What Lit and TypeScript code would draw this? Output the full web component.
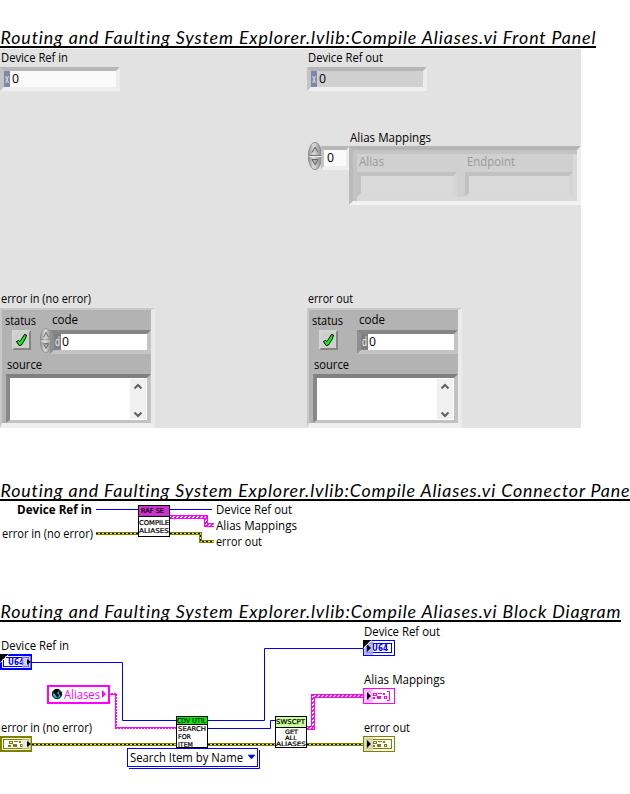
import { LitElement, html, svg, css } from "lit";
import { customElement } from "lit/decorators.js";

/* One line of text in a fixed 16px row, fitted to a given width. */
const label = (text: string, width: number, cls = "") => html`
  <svg class="label ${cls}" width=${width + 2} height="16">
    <text x="1" y="12" textLength=${width} lengthAdjust="spacingAndGlyphs">${text}</text>
  </svg>`;

const title = (text: string, width: number, cls: string) => html`
  <h1 class="title ${cls}">
    <svg width="630" height="24">
      <text x="0.5" y="20" textLength=${width} lengthAdjust="spacing">${text}</text>
    </svg>
  </h1>`;

/* Text placed on a diagram canvas. */
const put = (text: string, x: number, y: number, w: number, cls = "ui") =>
  svg`<text class=${cls} x=${x} y=${y} textLength=${w} lengthAdjust="spacingAndGlyphs">${text}</text>`;

const wire = (d: string) => svg`<path d=${d} fill="none" stroke="#0000f5" />`;

const errorWire = (d: string) => svg`
  <path d=${d} fill="none" stroke="#808000" stroke-width="3" />
  <path d=${d} fill="none" stroke="#f0f000" stroke-width="1" />
  <path d=${d} fill="none" stroke="#000" stroke-width="1" stroke-dasharray="2 2" />`;

const clusterWire = (d: string) => svg`
  <path d=${d} fill="none" stroke="#ff00ff" stroke-width="4" />
  <path d=${d} fill="none" stroke="#fff" stroke-dasharray="2 2" stroke-dashoffset=".5" transform="translate(-.5 -.5)" />
  <path d=${d} fill="none" stroke="#fff" stroke-dasharray="2 2" stroke-dashoffset="2.5" transform="translate(.5 .5)" />`;

const spinner = (w: number, h: number) => html`
  <svg class="spinner" width=${w} height=${h} viewBox="0 0 14 28" preserveAspectRatio="none">
    <defs>
      <linearGradient id="m" x1="0" x2="1">
        <stop offset="0" stop-color="#8e8e8e" /><stop offset=".4" stop-color="#dcdcdc" /><stop offset="1" stop-color="#858585" />
      </linearGradient>
    </defs>
    <ellipse cx="7" cy="14" rx="6.7" ry="13.7" fill="url(#m)" stroke="#858585" stroke-width=".8" />
    <path d="M1 13.5h12" stroke="#777" /><path d="M1 14.5h12" stroke="#eee" />
    <path d="M4 10.5L7 5l3 5.5" fill="#c6c6c6" stroke="#666" />
    <path d="M4 17.5h6L7 23z" fill="#aaa" stroke="#666" />
  </svg>`;

/* 16px-high diagram terminal: thick frame for controls, thin frame for indicators. */
const terminal = (x: number, y: number, color: string, pale: string, kind: string, input: boolean) => svg`
  <g transform="translate(${x} ${y})">
    <rect width="32" height="16" fill=${color} />
    ${input
      ? svg`<path d="M2.5 2.5h27v11h-27z" fill=${color} stroke="#fff"/><rect x="4" y="4" width="24" height="8" fill="#fff"/>`
      : svg`<rect x="1" y="1" width="30" height="14" fill="#fff"/>
            ${kind === "array" ? "" : svg`<rect x="3" y="3" width="26" height="10" fill=${color}/><rect x="4" y="4" width="24" height="8" fill="#fff"/>`}`}
    ${kind === "u64"
      ? svg`<text class="tiny heavy" x=${input ? 8 : 9} y="11" textLength="16" lengthAdjust="spacingAndGlyphs" fill=${color}>U64</text>`
      : svg`<g fill=${color} transform="translate(${input ? 0 : 1} 0)">
              <rect x="9" y="5" width="4" height="3"/><rect x="14" y="5" width="4" height="1"/>
              <rect x="19" y="5" width="2" height="2"/><rect x="8" y="9" width="3" height="2"/>
              <rect x="13" y="8" width="4" height="3"/><rect x="20" y="8" width="3" height="3"/></g>
            <rect x=${input ? 10 : 11} y="6" width="2" height="1" fill="#fff"/><rect x=${input ? 21 : 22} y="9" width="1" height="1" fill="#fff"/>`}
    ${kind === "array"
      ? svg`<path d="M8 3.5h-2.5v9h2.5M24 3.5h2.5v9h-2.5" fill="none" stroke=${color}/>` : ""}
    ${input
      ? svg`<rect x="22" y="2" width="9" height="12" fill=${pale} opacity=".6"/><path d="M27 5l4 3-4 3z" fill="#000"/>`
      : svg`<rect x="1" y="1" width="9" height="14" fill=${pale} opacity=".8"/><path d="M4 4l4 4-4 4z" fill="#000"/>`}
    ${kind === "u64" ? svg`<path d="M0 0h8L0 8z" fill="#000"/><path d="M8.5 .5L.5 8.5" stroke="#fff"/>` : ""}
  </g>`;

@customElement("app-root")
export class AppRoot extends LitElement {
  static styles = css`
    :host { display: block; width: 630px; height: 794px; background: #fff; overflow: hidden;
      font-family: "Open Sans", "Noto Sans", sans-serif; font-size: 12px; color: #000; }
    * { box-sizing: border-box; }
    svg { display: block; flex: none; }
    text { white-space: pre; }
    .label { fill: currentColor; overflow: visible; }
    .muted { color: #999; }
    .title { margin: 0; height: 24px; overflow: hidden; border-bottom: 2px solid #000; font-weight: 400; }
    .title text { font: italic 17.8px Lato, sans-serif; font-variant-ligatures: none; }
    .front { margin-top: 24px; width: 596px; }
    .connector { margin-top: 49px; }
    .block { margin-top: 49px; width: 621px; }
    .panel { display: flex; width: 581px; height: 379px; margin-top: 1px; padding-top: 1px; background: #e2e2e2; }
    .col { width: 307px; display: flex; flex-direction: column; }
    .col.right { width: 274px; }
    .field { display: flex; align-items: stretch; width: 120px; height: 24px; background: #fafafa;
      border: 4px solid; border-color: #b6b6b6 #ececec #efefef #c3c3c3; }
    .field > .label { margin-left: 1px; }
    .ref { margin-top: 1px; }
    .ref.out { background: #d0d0d0; }
    .radix { width: 6px; flex: none; background: #7a8aa8; color: #eef1f6; }
    .radix.dec { width: 7px; background: #808080; }
    .array { display: flex; margin-top: 38px; }
    .index { display: flex; width: 43px; padding: 13px 0 0 1px; }
    .index .field { width: 29px; margin: 4px 0 0 -1px; border-left-width: 3px; }
    .index .field > .label { margin-left: 2px; }
    .names-row { padding-top: 1px; margin-left: -1px; }
    .mappings { height: 59px; width: 232px; display: flex; background: #d0d0d0;
      border: 4px solid; border-color: #b4b4b4 #efefef #f2f2f2 #bababa; box-shadow: inset 4px 4px #c4c4c4, inset -4px -4px #d9d9d9; }
    .cell { width: 108px; padding: 4px 0 0 4px; }
    .cell .label { margin-left: 0.5px; }
    .cell .field { width: 100px; height: 25px; margin-top: 2px; background: #dadada; border-color: #c1c1c1 #d5d5d5 #d8d8d8 #c1c1c1; }
    .cell.end .field { width: 108px; }
    .status-group { margin-top: 200px; }
    .right .status-group { margin-top: 86px; }
    .cluster { width: 155px; height: 120px; margin-top: 1px; background: #b3b3b3; border: solid;
      border-width: 2px 4px 5px 2px; border-color: #c8c8c8 #ebebeb #eee #c8c8c8; }
    .row { display: flex; }
    .names { height: 20px; padding: 3px 0 0 2px; }
    .names .second { margin: -1px 0 0 14px; }
    .values { height: 24px; padding-left: 10px; }
    .led { width: 19px; height: 20px; background: #cfcfcf; border: 2px solid; border-color: #d4d4d4 #858585 #858585 #d4d4d4; }
    .spin { width: 19px; padding: 0 0 0 9px; margin-top: -2px; }
    .code { width: 101px; background: #fff; border-color: #858585 #c4c4c4 #c4c4c4 #909090; }
    .code > .label { margin-left: 0; }
    .source-name { padding: 3px 0 0 4px; }
    .source { display: flex; justify-content: flex-end; width: 145px; height: 49px; margin: 1px 0 0 4px; padding: 1px; background: #fff;
      border: 4px solid; border-color: #808080 #c2c2c2 #c2c2c2 #888; border-bottom-width: 3px; }
    .scroll { width: 16px; height: 40px; background: #f0f0f0; }
    .canvas { overflow: visible; }
    .ui { font-size: 12px; }
    .bold { font-size: 12px; font-weight: 700; }
    .pink { font-size: 12px; fill: #ff00ff; }
    .tiny { font: 6.6px "DejaVu Sans", sans-serif; stroke: #000; stroke-width: .2px; }
    .tight { font-size: 6px; }
    .heavy { font-size: 8.5px; font-weight: 700; stroke: none; }
  `;

  private cluster(name: string, width: number, control: boolean) {
    return html`
      <section class="status-group">
        ${label(name, width)}
        <div class="cluster">
          <div class="row names">${label("status", 31)}<div class="second">${label("code", 26)}</div></div>
          <div class="row values">
            <div class="led">
              <svg width="15" height="16">
                <path d="M2.5 9.5l2-1 1.5 1 4.5-7 2 .5-1 3.5-4 6.5-2.5.5z" fill="#00ff00" stroke="#000" />
              </svg>
            </div>
            <div class="spin">${control ? spinner(12, 25) : ""}</div>
            <div class="field code">
              <div class="radix dec">${label("d", 5)}</div>${label("0", 7)}
            </div>
          </div>
          <div class="source-name">${label("source", 35)}</div>
          <div class="source">
            <svg class="scroll" viewBox="0 0 16 40">
              <path d="M4.5 9.500L8 6l3.500 3.500M4.500 33.500L8 37l3.500-3.500" fill="none" stroke="#606060" stroke-width="2" />
            </svg>
          </div>
        </div>
      </section>`;
  }

  private reference(name: string, width: number, out: boolean) {
    return html`
      ${label(name, width)}
      <div class="field ref ${out ? "out" : ""}">
        <div class="radix">${label("x", 4)}</div>${label("0", 7)}
      </div>`;
  }

  private node(x: number, y: number, header: string, split: number, lines: unknown) {
    return svg`
      <rect x=${x} y=${y} width="32" height="32" fill="#000" />
      <rect x=${x + 1} y=${y + 1} width="30" height="30" fill="#fff" />
      <rect x=${x + 1} y=${y + 1} width="30" height=${split} fill=${header} />
      <rect x=${x + 1} y=${y + split} width="30" height="1" fill="#000" />
      ${lines}`;
  }

  render() {
    const name = "Routing and Faulting System Explorer.lvlib:Compile Aliases.vi ";
    return html`
      ${title(name + "Front Panel", 595, "front")}
      <main class="panel">
        <div class="col">
          ${this.reference("Device Ref in", 67, false)}
          ${this.cluster("error in (no error)", 90, true)}
        </div>
        <div class="col right">
          ${this.reference("Device Ref out", 75, true)}
          <section class="array">
            <div class="index">${spinner(14, 28)}<div class="field">${label("0", 7)}</div></div>
            <div class="names-row">
              ${label("Alias Mappings", 81)}
              <div class="mappings">
                <div class="cell">${label("Alias", 25, "muted")}<div class="field"></div></div>
                <div class="cell end">${label("Endpoint", 48, "muted")}<div class="field"></div></div>
              </div>
            </div>
          </section>
          ${this.cluster("error out", 45, false)}
        </div>
      </main>

      ${title(name + "Connector Pane", 629, "connector")}
      <svg class="canvas" width="630" height="48" viewBox="0 501 630 48">
        ${put("Device Ref in", 17, 514, 75, "bold")}
        ${put("error in (no error)", 2, 538, 91)}
        ${put("Device Ref out", 216, 514, 76)}
        ${put("Alias Mappings", 216, 530, 81)}
        ${put("error out", 216, 546, 46)}
        ${wire("M96 509.500H138M170 509.500H212")}
        ${clusterWire("M170 517H206V525H214")}
        ${errorWire("M96 533.500H138")}
        ${errorWire("M170 533.500H200.500V541.500H214")}
        ${this.node(138, 505, "#cc33cc", 11, [
          put("RAF SE", 141, 513, 23, "tiny"),
          put("COMPILE", 139, 525, 30, "tiny"),
          put("ALIASES", 139, 533, 30, "tiny"),
        ])}
      </svg>

      ${title(name + "Block Diagram", 620, "block")}
      <svg class="canvas" width="630" height="172" viewBox="0 622 630 172">
        ${put("Device Ref in", 1, 650, 68)}
        ${put("error in (no error)", 1, 732, 91)}
        ${put("Device Ref out", 364, 636, 76)}
        ${put("Alias Mappings", 364, 684, 81)}
        ${put("error out", 364, 732, 46)}
        ${wire("M32 662.500H122.500V720.500H176M208 720.500H264.500V648.500H363M208 728.500H270.500V720.500H275")}
        <path d="M110 694H116V728H176" fill="none" stroke="#ff00ff" stroke-width="2" />
        <path d="M110 693.500H116.500V728.500H176" fill="none" stroke="#fff" stroke-dasharray="1 2" />
        ${clusterWire("M307 728H313V696H363")}
        ${errorWire("M32 744.500H176")}
        ${errorWire("M208 744.500H275")}
        ${errorWire("M307 744.500H363")}

        ${terminal(0, 654, "#0000ff", "#b4b4ff", "u64", true)}
        ${terminal(0, 736, "#808000", "#dcdcb4", "cluster", true)}
        ${terminal(363, 640, "#0000ff", "#a8a8ff", "u64", false)}
        ${terminal(363, 688, "#ff00ff", "#ffb4ff", "array", false)}
        ${terminal(363, 736, "#808000", "#d6d6ac", "cluster", false)}

        <rect x="48" y="686" width="61" height="17" fill="#fff" stroke="#ff00ff" stroke-width="2" />
        <circle cx="57" cy="694" r="4.700" fill="#18b8e8" stroke="#000" />
        <path d="M54 690l4-1 1 2-2 2 2 2-1 3-2-2-1-2-2-1zM59 691l3 2-1 3-2-2z" fill="#000" />
        ${put("Aliases", 64, 699, 36, "pink")}
        <path d="M102 690l4 4-4 4z" fill="#ff00ff" />

        ${this.node(176, 716, "#00f000", 8, [
          put("CDV UTIL", 177, 723, 29, "tiny"),
          put("SEARCH", 178, 731, 28, "tiny"),
          put("FOR", 178, 739, 13, "tiny"),
          put("ITEM", 178, 747, 15, "tiny"),
        ])}
        ${this.node(275, 716, "#ccff99", 11, [
          put("SWSCPT", 276, 724, 29, "tiny"),
          put("GET", 285, 734, 13, "tiny tight"),
          put("ALL", 285, 740, 12, "tiny tight"),
          put("ALIASES", 276, 746, 30, "tiny tight"),
        ])}

        <path d="M129 768.500H259.500V750" fill="none" stroke="#0000ff" />
        <rect x="127.500" y="748.500" width="130" height="18" fill="#fff" stroke="#0000ff" />
        ${put("Search Item by Name", 130, 762, 113)}
        <path d="M248 755h7l-3.500 4z" fill="#0000ff" stroke="#0000ff" stroke-width=".5" />
      </svg>
    `;
  }
}
